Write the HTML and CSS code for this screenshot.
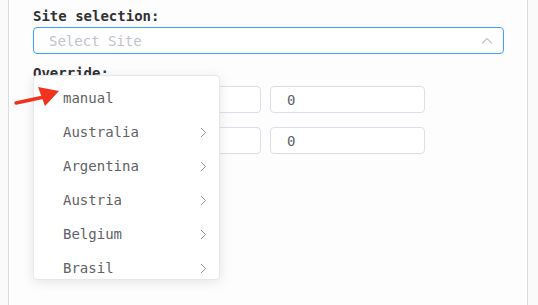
FILE: index.html
```html
<!DOCTYPE html>
<html>

<head>
    <title>Site selection</title>
    <link rel="stylesheet" href="styles.css">
</head>

<body>

    <div class="panel">
        <div class="field">
            <label class="field-label">Site selection:</label>
            <div class="select is-open">
                <span class="placeholder">Select Site</span>
                <svg class="caret" width="12" height="8" viewBox="0 0 12 8">
                    <path d="M1 6.5 L6 1.5 L11 6.5" fill="none" stroke="#c0c4cc" stroke-width="1.2" />
                </svg>
            </div>
        </div>

        <div class="field">
            <label class="field-label">Override:</label>
            <div class="override-row">
                <input class="text-input" type="text" value="">
                <input class="text-input" type="text" value="0">
            </div>
            <div class="override-row">
                <input class="text-input" type="text" value="">
                <input class="text-input" type="text" value="0">
            </div>
        </div>

        <div class="dropdown">
            <ul class="dropdown-list">
                <li class="dropdown-item">manual</li>
                <li class="dropdown-item has-children">Australia <svg class="chevron" width="7" height="11" viewBox="0 0 7 11"><path d="M1 1 L5.5 5.5 L1 10" fill="none" stroke="#909399" stroke-width="1" /></svg></li>
                <li class="dropdown-item has-children">Argentina <svg class="chevron" width="7" height="11" viewBox="0 0 7 11"><path d="M1 1 L5.5 5.5 L1 10" fill="none" stroke="#909399" stroke-width="1" /></svg></li>
                <li class="dropdown-item has-children">Austria <svg class="chevron" width="7" height="11" viewBox="0 0 7 11"><path d="M1 1 L5.5 5.5 L1 10" fill="none" stroke="#909399" stroke-width="1" /></svg></li>
                <li class="dropdown-item has-children">Belgium <svg class="chevron" width="7" height="11" viewBox="0 0 7 11"><path d="M1 1 L5.5 5.5 L1 10" fill="none" stroke="#909399" stroke-width="1" /></svg></li>
                <li class="dropdown-item has-children">Brasil <svg class="chevron" width="7" height="11" viewBox="0 0 7 11"><path d="M1 1 L5.5 5.5 L1 10" fill="none" stroke="#909399" stroke-width="1" /></svg></li>
            </ul>
        </div>

        <!-- annotation arrow -->
        <svg class="pointer-arrow" width="52" height="26" viewBox="0 0 52 26">
            <path d="M4 19 L32 13" stroke="#f0321e" stroke-width="3.5" stroke-linecap="round" />
            <path d="M26 3 L47 7 L33 22 Z" fill="#f0321e" />
        </svg>
    </div>

</body>
</html>
```

FILE: styles.css
```css
body {
    margin: 0;
    background-color: #fafafa;
    font-family: "DejaVu Sans Mono", "Liberation Mono", monospace;
    font-size: 14px;
}

.panel {
    position: relative;
    box-sizing: border-box;
    margin-left: 8px;
    width: 520px;
    height: 305px;
    padding: 7px 24px 0 24px;
    background-color: #fdfdfd;
    border-left: 1px solid #dcdcdc;
    border-right: 1px solid #dcdcdc;
}

.field {
    margin-bottom: 10px;
}

.field-label {
    display: block;
    font-weight: bold;
    color: #303133;
    line-height: 18px;
    margin-bottom: 2px;
}

.select {
    display: flex;
    align-items: center;
    justify-content: space-between;
    box-sizing: border-box;
    width: 471px;
    height: 27px;
    padding: 0 10px 0 15px;
    background-color: #fff;
    border: 1px solid #409eff;
    border-radius: 4px;
}

.placeholder {
    color: #c0c4cc;
}

.override-row {
    display: flex;
    gap: 9px;
    margin-bottom: 14px;
    padding-left: 73px;
}

.override-row:first-of-type {
    margin-top: 4px;
}

.text-input {
    box-sizing: border-box;
    width: 155px;
    height: 27px;
    padding: 0 16px;
    border: 1px solid #dcdfe6;
    border-radius: 4px;
    background-color: #fff;
    font-family: inherit;
    font-size: 14px;
    color: #606266;
    outline: none;
}

.dropdown {
    position: absolute;
    left: 24px;
    top: 75px;
    box-sizing: border-box;
    width: 187px;
    height: 205px;
    overflow: hidden;
    background-color: #fff;
    border: 1px solid #e4e7ed;
    border-radius: 4px;
    box-shadow: 0 2px 12px rgba(0, 0, 0, 0.1);
}

.dropdown-list {
    list-style: none;
    margin: 0;
    padding: 5px 0 0 0;
}

.dropdown-item {
    display: flex;
    align-items: center;
    justify-content: space-between;
    height: 34px;
    padding: 0 12px 0 29px;
    color: #606266;
}

.pointer-arrow {
    position: absolute;
    left: 3px;
    top: 84px;
}
```
